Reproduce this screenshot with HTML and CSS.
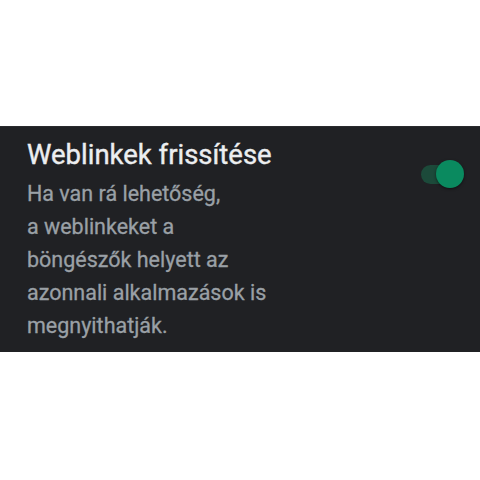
FILE: index.html
```html
<!DOCTYPE html>
<html lang="hu">
<head>
<meta charset="utf-8">
<link rel="stylesheet" href="styles.css">
</head>
<body>
<div class="page">
  <div class="panel">
    <div class="text">
      <div class="title">Weblinkek frissítése</div>
      <div class="desc">Ha van rá lehetőség,<br>a weblinkeket a<br>böngészők helyett az<br>azonnali alkalmazások is<br>megnyithatják.</div>
    </div>
    <div class="toggle">
      <div class="track"></div>
      <div class="thumb"></div>
    </div>
  </div>
</div>
</body>
</html>
```
FILE: styles.css
```css
html, body {
  margin: 0;
  padding: 0;
  background: #ffffff;
}
.page {
  width: 480px;
  height: 480px;
  display: flex;
  flex-direction: column;
  padding-top: 127px;
  box-sizing: border-box;
}
.panel {
  background: #202124;
  border-top: 1px solid #2a2b2e;
  margin-top: -1px;
  display: flex;
  justify-content: space-between;
  padding: 12px 16px 10px 27px;
  font-family: Roboto, "Noto Sans", sans-serif;
}
.title {
  color: #eceef0;
  font-size: 27.5px;
  line-height: 32px;
  height: 32px;
  margin-bottom: 6px;
  -webkit-text-stroke: 0.4px #eceef0;
}
.desc {
  color: #9aa0a6;
  font-size: 21.5px;
  line-height: 33px;
  -webkit-text-stroke: 0.3px #9aa0a6;
}
.toggle {
  position: relative;
  width: 43px;
  height: 28px;
  margin-top: 21px;
}
.track {
  position: absolute;
  left: 0;
  top: 5px;
  width: 40px;
  height: 19px;
  border-radius: 10px;
  background: #1c4a3a;
}
.thumb {
  position: absolute;
  right: 0;
  top: 0;
  width: 28px;
  height: 28px;
  border-radius: 50%;
  background: #0a8a5f;
  box-shadow: 0 1px 3px rgba(0,0,0,0.5);
}
```
